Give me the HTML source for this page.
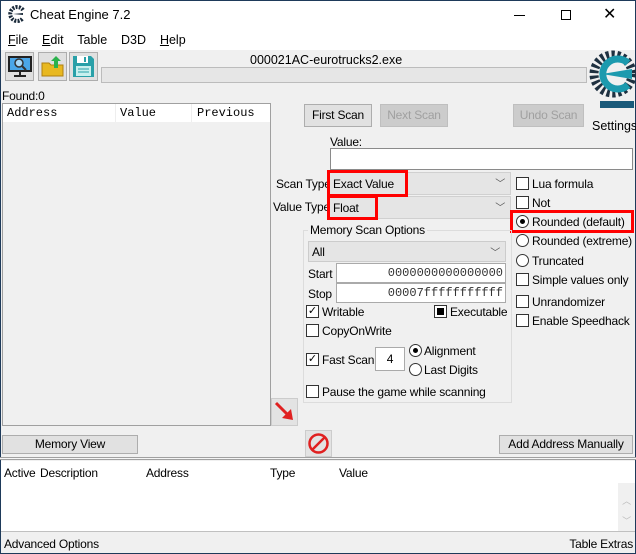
<!DOCTYPE html>
<html><head><meta charset="utf-8"><style>
*{box-sizing:border-box;margin:0;padding:0}
body{width:636px;height:554px;overflow:hidden;background:#f0f0f0;font-family:"Liberation Sans",sans-serif;font-size:12px;letter-spacing:-0.2px;color:#000;position:relative}
.a{position:absolute;white-space:nowrap}
.btn{position:absolute;background:#e1e1e1;border:1px solid #adadad;text-align:center}
.dis{color:#a0a0a0;background:#cccccc;border-color:#bfbfbf}
.inp{position:absolute;background:#fff;border:1px solid #7a7a7a}
.cb{position:absolute;width:13px;height:13px;border:1px solid #333;background:#fff;letter-spacing:0}
.rd{position:absolute;width:13px;height:13px;border:1px solid #333;border-radius:50%;background:#fff}
.combo{position:absolute;background:#e5e5e5;border:1px solid #d0d0d0}
.red{position:absolute;border:3px solid #f00}
.chev{position:absolute;right:5px;top:2px;color:#555;font-size:10px}
.m{font-family:"Liberation Mono",monospace;letter-spacing:0}
</style></head><body>
<div class="a" style="left:0;top:0;width:636px;height:50px;background:#fff"></div>
<div class="a" style="left:0;top:0;width:1px;height:554px;background:#1e3a5a"></div>
<div class="a" style="right:0;top:0;width:1px;height:554px;background:#1e3a5a"></div>
<div class="a" style="left:0;top:0;width:636px;height:1px;background:#1e3a5a"></div>
<div class="a" style="left:0;bottom:0;width:636px;height:1px;background:#1e3a5a"></div>
<svg class="a" style="left:8px;top:5px" width="18" height="18" viewBox="0 0 18 18"><path d="M15 5 A7 7 0 1 0 15 13" fill="none" stroke="#1a2a3a" stroke-width="4" stroke-dasharray="2 1.2"/><path d="M5 9 L15 8 L15 10 Z" fill="#1a2a3a"/></svg>
<div class="a" style="left:30px;top:7px;font-size:13px;letter-spacing:0">Cheat Engine 7.2</div>
<div class="a" style="left:514px;top:15px;width:11px;height:1px;background:#000"></div>
<div class="a" style="left:561px;top:10px;width:10px;height:10px;border:1px solid #000"></div>
<div class="a" style="left:603px;top:4px;font-size:16px;font-weight:100">✕</div>
<div class="a" style="left:8px;top:33px;font-size:12.5px;letter-spacing:0"><u>F</u>ile&nbsp;&nbsp;&nbsp; <u>E</u>dit&nbsp;&nbsp;&nbsp; Table&nbsp;&nbsp;&nbsp; D3D&nbsp;&nbsp;&nbsp; <u>H</u>elp</div>

<div class="btn" style="left:5px;top:52px;width:29px;height:29px;background:#e0e0e0"></div>
<svg class="a" style="left:8px;top:56px" width="24" height="22"><rect x="1" y="1" width="22" height="14" fill="#4aa6e8" stroke="#222" stroke-width="2"/><circle cx="11" cy="7" r="4" fill="#a8d8f8" stroke="#333" stroke-width="1.5"/><path d="M14 10 L18 14" stroke="#333" stroke-width="2"/><path d="M12 15 v4 M6 20 h12" stroke="#222" stroke-width="2"/></svg>
<div class="btn" style="left:38px;top:52px;width:29px;height:29px;background:#e0e0e0"></div>
<svg class="a" style="left:41px;top:55px" width="24" height="22"><path d="M1 8 h7 l2 2 h12 v11 h-21z" fill="#e8b820" stroke="#b08010"/><path d="M15 1 l5 5 h-3 v7 h-4 v-7 h-3z" fill="#2bb24c"/></svg>
<div class="btn" style="left:69px;top:52px;width:29px;height:29px;background:#e0e0e0"></div>
<svg class="a" style="left:72px;top:55px" width="23" height="23"><path d="M1 1 h18 l3 3 v18 h-21z" fill="#29a0a8"/><rect x="5" y="1" width="11" height="7" fill="#fff"/><rect x="12" y="2" width="2" height="5" fill="#29a0a8"/><rect x="4" y="11" width="15" height="10" fill="#c8f0ee"/><path d="M6 14h11M6 17h11" stroke="#29a0a8"/></svg>
<div class="a" style="left:250px;top:53px;font-size:12.5px;letter-spacing:0">000021AC-eurotrucks2.exe</div>
<div class="a" style="left:101px;top:67px;width:486px;height:16px;background:#e6e6e6;border:1px solid #bcbcbc"></div>
<svg class="a" style="left:588px;top:48px" width="48" height="66"><circle cx="25" cy="26" r="19" fill="none" stroke="#1e3040" stroke-width="9" stroke-dasharray="3 2.5"/><path d="M40 15 A15 15 0 1 0 40 37" fill="none" stroke="#1c9aae" stroke-width="7"/><path d="M14 26 L44 21 L44 31 Z" fill="#1c9aae"/><rect x="12" y="53" width="34" height="7" fill="#1a5a7a"/></svg>
<div class="a" style="left:592px;top:119px;font-size:12.5px;letter-spacing:0">Settings</div>

<div class="a" style="left:2px;top:89px">Found:0</div>
<div class="a" style="left:2px;top:103px;width:269px;height:323px;border:1px solid #a0a0a0;background:#f0f0f0"></div>
<div class="a m" style="left:3px;top:104px;width:267px;height:18px;background:#fff;font-size:12px;padding-top:2px">
<span class="a" style="left:4px">Address</span><span class="a" style="left:112px;border-left:1px solid #eee;padding-left:4px;height:18px;top:0;padding-top:2px">Value</span><span class="a" style="left:188px;border-left:1px solid #eee;padding-left:5px;height:18px;top:0;padding-top:2px">Previous</span></div>

<div class="btn" style="left:304px;top:104px;width:68px;height:23px;line-height:21px">First Scan</div>
<div class="btn dis" style="left:380px;top:104px;width:68px;height:23px;line-height:21px">Next Scan</div>
<div class="btn dis" style="left:513px;top:104px;width:71px;height:23px;line-height:21px">Undo Scan</div>

<div class="a" style="left:330px;top:135px">Value:</div>
<div class="inp" style="left:330px;top:148px;width:303px;height:22px;border-color:#8a8a8a"></div>
<div class="a" style="left:276px;top:177px">Scan Type</div>
<div class="combo" style="left:327px;top:172px;width:184px;height:23px"><span class="a" style="left:5px;top:4px">Exact Value</span><span class="chev">﹀</span></div>
<div class="a" style="left:273px;top:200px">Value Type</div>
<div class="combo" style="left:327px;top:196px;width:184px;height:23px"><span class="a" style="left:5px;top:4px">Float</span><span class="chev">﹀</span></div>
<div class="red" style="left:327px;top:170px;width:81px;height:27px"></div>
<div class="red" style="left:327px;top:195px;width:51px;height:25px"></div>

<div class="cb" style="left:516px;top:177px"></div><div class="a" style="left:532px;top:177px">Lua formula</div>
<div class="cb" style="left:516px;top:196px"></div><div class="a" style="left:532px;top:196px">Not</div>
<div class="rd" style="left:516px;top:215px"><div style="position:absolute;left:3px;top:3px;width:5px;height:5px;border-radius:50%;background:#000"></div></div><div class="a" style="left:532px;top:215px">Rounded (default)</div>
<div class="red" style="left:510px;top:210px;width:124px;height:23px"></div>
<div class="rd" style="left:516px;top:234px"></div><div class="a" style="left:532px;top:234px">Rounded (extreme)</div>
<div class="rd" style="left:516px;top:254px"></div><div class="a" style="left:532px;top:254px">Truncated</div>
<div class="cb" style="left:516px;top:273px"></div><div class="a" style="left:532px;top:273px">Simple values only</div>
<div class="cb" style="left:516px;top:295px"></div><div class="a" style="left:532px;top:295px">Unrandomizer</div>
<div class="cb" style="left:516px;top:314px"></div><div class="a" style="left:532px;top:314px">Enable Speedhack</div>

<div class="a" style="left:303px;top:230px;width:209px;height:173px;border:1px solid #dcdcdc"></div>
<div class="a" style="left:308px;top:223px;background:#f0f0f0;padding:0 2px">Memory Scan Options</div>
<div class="combo" style="left:308px;top:241px;width:198px;height:21px;border-color:#ccc"><span class="a" style="left:3px;top:3px">All</span><span class="chev">﹀</span></div>
<div class="a" style="left:308px;top:267px">Start</div>
<div class="inp" style="left:336px;top:263px;width:170px;height:20px;border-color:#aaa"><span class="a m" style="right:2px;top:2px;font-size:12px;color:#333">0000000000000000</span></div>
<div class="a" style="left:308px;top:287px">Stop</div>
<div class="inp" style="left:336px;top:283px;width:170px;height:20px;border-color:#aaa"><span class="a m" style="right:2px;top:2px;font-size:12px;color:#333">00007fffffffffff</span></div>
<div class="cb" style="left:306px;top:305px;font-size:11px;line-height:11px;text-align:center">✓</div><div class="a" style="left:322px;top:305px">Writable</div>
<div class="cb" style="left:434px;top:305px"><div style="position:absolute;left:2px;top:2px;width:7px;height:7px;background:#000"></div></div><div class="a" style="left:450px;top:305px">Executable</div>
<div class="cb" style="left:306px;top:324px"></div><div class="a" style="left:322px;top:324px">CopyOnWrite</div>
<div class="cb" style="left:306px;top:353px;font-size:11px;line-height:11px;text-align:center">✓</div><div class="a" style="left:322px;top:353px">Fast Scan</div>
<div class="inp" style="left:375px;top:347px;width:30px;height:24px;border-color:#aaa;text-align:center;line-height:22px">4</div>
<div class="rd" style="left:409px;top:344px"><div style="position:absolute;left:3px;top:3px;width:5px;height:5px;border-radius:50%;background:#000"></div></div><div class="a" style="left:424px;top:344px">Alignment</div>
<div class="rd" style="left:409px;top:363px"></div><div class="a" style="left:424px;top:363px">Last Digits</div>
<div class="cb" style="left:306px;top:385px"></div><div class="a" style="left:322px;top:385px">Pause the game while scanning</div>

<div class="btn" style="left:271px;top:398px;width:27px;height:28px;background:#e3e3e3;border-color:#ccc"></div>
<svg class="a" style="left:274px;top:401px" width="22" height="22"><path d="M2 2 L15 15" stroke="#e02020" stroke-width="3"/><path d="M19 19 L8 17 L17 8 Z" fill="#e02020"/></svg>

<div class="btn" style="left:2px;top:435px;width:136px;height:19px;line-height:17px">Memory View</div>
<div class="btn" style="left:305px;top:430px;width:27px;height:27px;background:#e3e3e3;border-color:#ccc"></div>
<svg class="a" style="left:307px;top:432px" width="23" height="23"><circle cx="11.5" cy="11.5" r="9" fill="none" stroke="#e02020" stroke-width="2.5"/><path d="M5 18 L18 5" stroke="#e02020" stroke-width="2.5"/></svg>
<div class="btn" style="left:499px;top:435px;width:134px;height:19px;line-height:17px">Add Address Manually</div>
<div class="a" style="left:0;top:457px;width:636px;height:3px;border-top:1px solid #a0a0a0;border-bottom:1px solid #a0a0a0;background:#f5f5f5"></div>

<div class="a" style="left:1px;top:461px;width:634px;height:71px;background:#fff;border-bottom:1px solid #c0c0c0"></div>
<div class="a" style="left:4px;top:466px">Active</div>
<div class="a" style="left:40px;top:466px">Description</div>
<div class="a" style="left:146px;top:466px">Address</div>
<div class="a" style="left:270px;top:466px">Type</div>
<div class="a" style="left:339px;top:466px">Value</div>
<div class="a" style="left:618px;top:483px;width:17px;height:48px;background:#f0f0f0;color:#bbb;font-size:9px;text-align:center;padding-top:8px;line-height:20px">︿<br>﹀</div>
<div class="a" style="left:4px;top:537px">Advanced Options</div>
<div class="a" style="right:3px;top:537px">Table Extras</div>
</body></html>
